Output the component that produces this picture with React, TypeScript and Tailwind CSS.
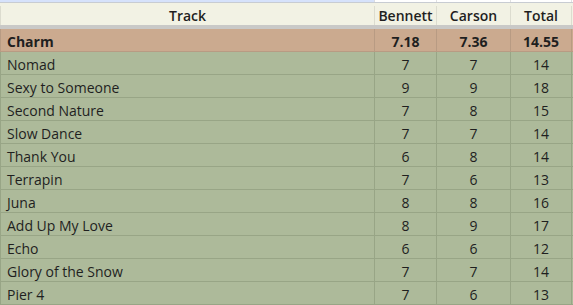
const rows = [
  { track: "Nomad", b: 7, c: 7, t: 14 },
  { track: "Sexy to Someone", b: 9, c: 9, t: 18 },
  { track: "Second Nature", b: 7, c: 8, t: 15 },
  { track: "Slow Dance", b: 7, c: 7, t: 14 },
  { track: "Thank You", b: 6, c: 8, t: 14 },
  { track: "Terrapin", b: 7, c: 6, t: 13 },
  { track: "Juna", b: 8, c: 8, t: 16 },
  { track: "Add Up My Love", b: 8, c: 9, t: 17 },
  { track: "Echo", b: 6, c: 6, t: 12 },
  { track: "Glory of the Snow", b: 7, c: 7, t: 14 },
  { track: "Pier 4", b: 7, c: 6, t: 13 },
];

const cols = "grid grid-cols-[375px_62px_74px_61px]";

export default function App() {
  return (
    <div
      className="w-[573px] h-[305px] overflow-hidden bg-white text-[14px] text-[#1f1f1f]"
      style={{ fontFamily: '"Open Sans", "Liberation Sans", sans-serif' }}
    >
      {/* partial row above the header */}
      <div className={`${cols} h-[3px] border-b border-[#c8ccd2]`}>
        <div className="bg-[#d6e2fb] border-r border-[#dadce0]" />
        <div className="border-r border-[#e1e1e1]" />
        <div className="border-r border-[#e1e1e1]" />
        <div className="border-r border-[#e1e1e1]" />
      </div>

      {/* header */}
      <div className={`${cols} h-[22px] bg-[#f2f2e4] font-semibold pt-[3px] leading-[19px]`}>
        <div className="text-center border-l border-r border-[#dcdccf]">Track</div>
        <div className="text-center border-r border-[#dcdccf]">Bennett</div>
        <div className="text-center border-r border-[#dcdccf]">Carson</div>
        <div className="text-center border-r border-[#dcdccf]">Total</div>
      </div>
      <div className="h-[4px] w-[573px] bg-[#c9c9c7]" />

      {/* average row */}
      <div className={`${cols} h-[23px] bg-[#cbaa8f] font-bold border-b border-[#b89b83]`}>
        <div className="pl-[6px] pt-[4px] leading-[18px] border-l border-r border-[#b89b83]">Charm</div>
        <div className="text-center pt-[4px] leading-[18px] border-r border-[#b89b83]">7.18</div>
        <div className="text-center pt-[4px] leading-[18px] border-r border-[#b89b83]">7.36</div>
        <div className="text-center pt-[4px] leading-[18px] border-r border-[#b89b83]">14.55</div>
      </div>

      {rows.map((r) => (
        <div
          key={r.track}
          className={`${cols} h-[23px] bg-[#adba9a] border-b border-[#98a586]`}
        >
          <div className="pl-[6px] pt-[4px] leading-[18px] border-l border-r border-[#98a586]">{r.track}</div>
          <div className="text-center pt-[4px] leading-[18px] border-r border-[#98a586]">{r.b}</div>
          <div className="text-center pt-[4px] leading-[18px] border-r border-[#98a586]">{r.c}</div>
          <div className="text-center pt-[4px] leading-[18px] border-r border-[#98a586]">{r.t}</div>
        </div>
      ))}
    </div>
  );
}
